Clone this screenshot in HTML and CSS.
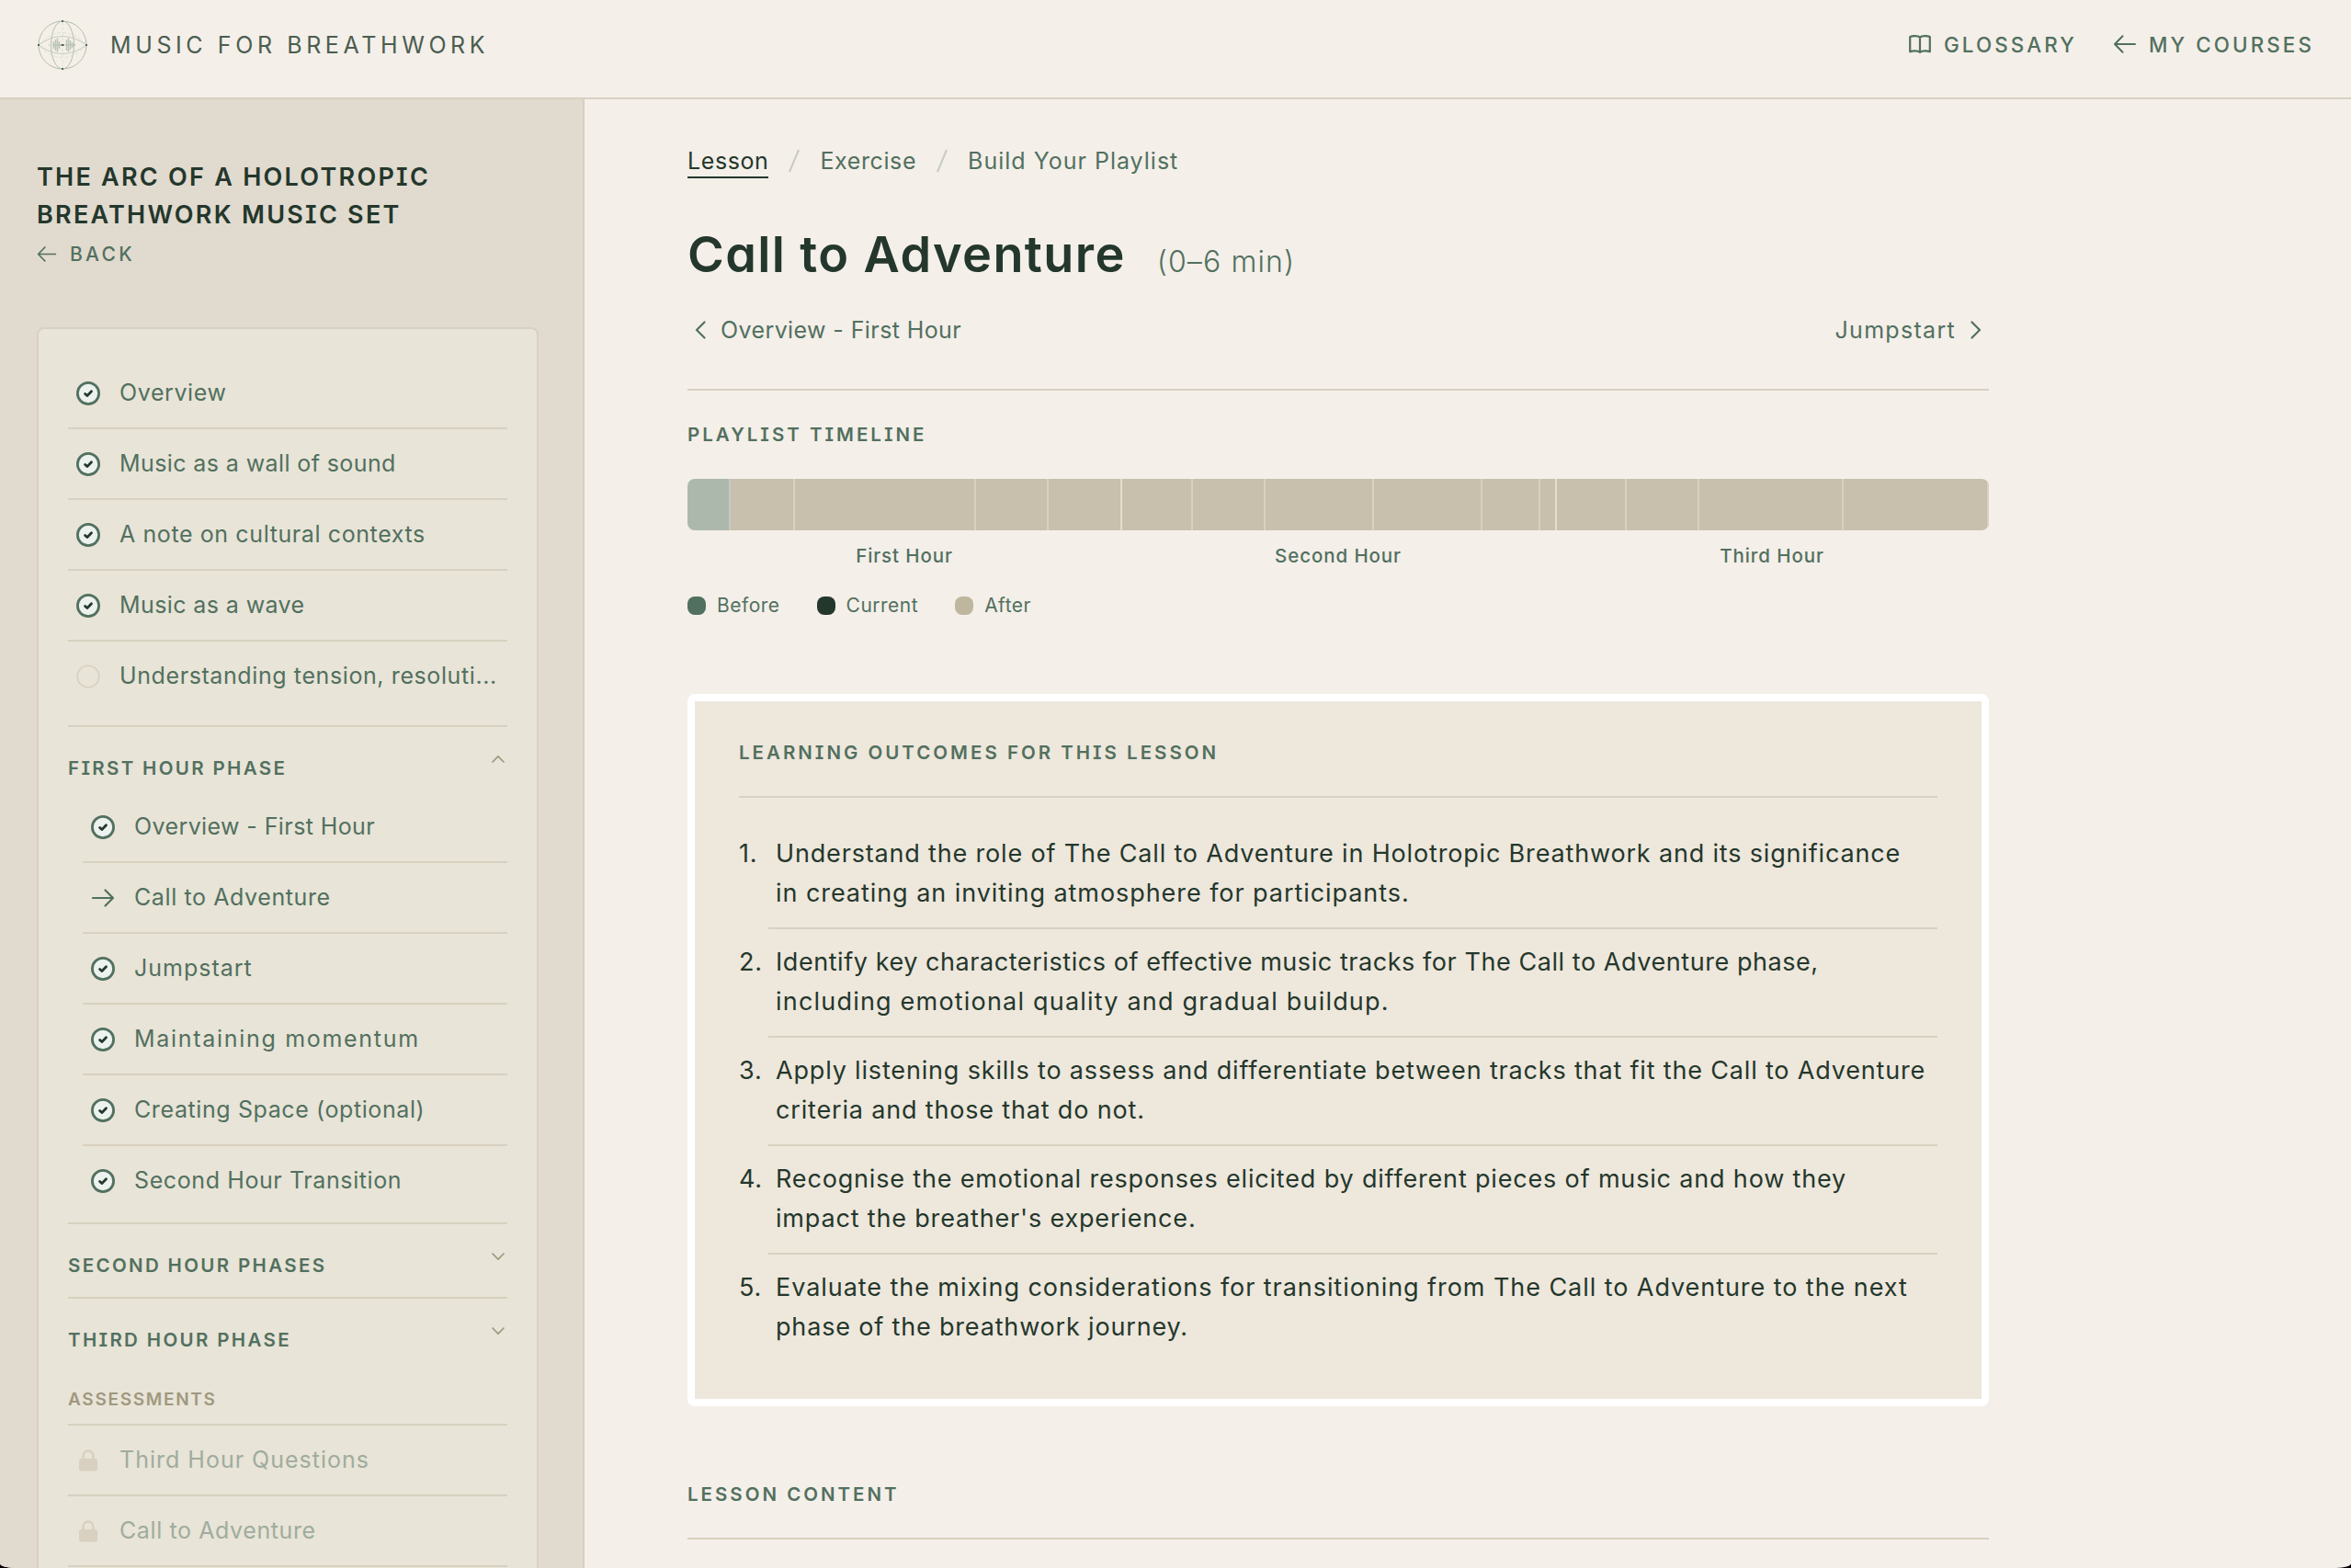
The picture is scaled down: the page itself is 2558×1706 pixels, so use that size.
FILE: index.html
```html
<!DOCTYPE html>
<html lang="en">
<head>
    <meta charset="UTF-8">
    <meta name="viewport" content="width=device-width, initial-scale=1.0">
    <title>Call to Adventure - Music for Breathwork</title>
    <link rel="stylesheet" href="styles.css">
</head>
<body>
    <!-- Shared icons -->
    <svg class="hidden">
        <symbol id="check" viewBox="0 0 26 26">
            <circle cx="13" cy="13" r="11.6" fill="#ecf2ee" stroke="#52705f" stroke-width="2.8"/>
            <path d="M9.6 13.4l2.3 2.2 4.6-4.9" fill="none" stroke="#24372c" stroke-width="2.8" stroke-linecap="round" stroke-linejoin="round"/>
        </symbol>
        <symbol id="empty" viewBox="0 0 26 26">
            <circle cx="13" cy="13" r="11.8" fill="none" stroke="#d8d0c0" stroke-width="1.6"/>
        </symbol>
        <symbol id="arrow-left" viewBox="0 0 24 20">
            <path d="M23 10H1.5M9.5 1.2L1 10l8.5 8.8" fill="none" stroke="currentColor" stroke-width="2" stroke-linecap="round" stroke-linejoin="round"/>
        </symbol>
        <symbol id="arrow-right" viewBox="0 0 26 26">
            <path d="M2 13h22M15.5 4.5l8.5 8.5-8.5 8.5" fill="none" stroke="#52705f" stroke-width="2.2" stroke-linecap="round" stroke-linejoin="round"/>
        </symbol>
        <symbol id="lock" viewBox="0 0 26 26">
            <path d="M7.5 12V8a5.5 5.5 0 0 1 11 0v4" fill="none" stroke="#d8d0c0" stroke-width="2.4"/>
            <rect x="3" y="11" width="20" height="13.5" rx="2.5" fill="#d8d0c0"/>
        </symbol>
        <symbol id="chevron" viewBox="0 0 16 16">
            <path d="M2 5l6 6.2 6-6.2" fill="none" stroke="currentColor" stroke-width="1.7" stroke-linecap="round" stroke-linejoin="round"/>
        </symbol>
    </svg>

    <div class="page">
        <header class="header">
            <a class="brand" href="#">
                <svg class="logo" viewBox="0 0 56 56">
                    <g fill="none" stroke="#b4bcb0" stroke-width="1">
                        <circle cx="28" cy="28" r="26"/>
                        <ellipse cx="28" cy="28" rx="12.5" ry="26"/>
                        <path d="M2 28Q28 9 54 28Q28 47 2 28" stroke="#c6ccc0"/>
                    </g>
                    <path d="M2 28Q28 1 54 28Q28 55 2 28M28 2v52" fill="none" stroke="#dfe1d2" stroke-dasharray="4 2"/>
                    <path d="M13 28h30" stroke="#c3cabf" stroke-width="2" stroke-dasharray="1 1"/>
                    <path d="M18.5 24v8M20.5 22v12M22.5 20.5v15M24.5 24v8M32.5 22v12M34.5 20.5v15M36.5 23v10M38.5 25v6" stroke="#bcc4b9" stroke-width="1.5"/>
                    <path d="M27 1h2v2h-2zM27 53h2v2h-2zM1 27h2v2h-2zM53 27h2v2h-2zM26.5 27h3v2h-3z" fill="#52655a"/>
                </svg>
                <span class="brand-name">MUSIC FOR BREATHWORK</span>
            </a>
            <nav class="top-nav">
                <a href="#">
                    <svg class="book" viewBox="0 0 24 20"><path d="M12 2.5C9.5.7 4.5.7 1.2 2v16.3c3.3-1.3 8.3-1.3 10.8.5 2.5-1.8 7.5-1.8 10.8-.5V2C19.5.7 14.5.7 12 2.5zM12 2.5v16.3" fill="none" stroke="currentColor" stroke-width="2.2" stroke-linejoin="round"/></svg>
                    GLOSSARY
                </a>
                <a href="#"><svg class="arrow"><use href="#arrow-left"/></svg>MY COURSES</a>
            </nav>
        </header>

        <div class="layout">
            <aside class="sidebar">
                <h2 class="course-title">THE ARC OF A HOLOTROPIC<br>BREATHWORK MUSIC SET</h2>
                <a class="back" href="#"><svg><use href="#arrow-left"/></svg>BACK</a>

                <div class="menu">
                    <ul class="lessons">
                        <li><svg><use href="#check"/></svg><span>Overview</span></li>
                        <li><svg><use href="#check"/></svg><span class="narrow">Music as a wall of sound</span></li>
                        <li><svg><use href="#check"/></svg><span>A note on cultural contexts</span></li>
                        <li><svg><use href="#check"/></svg><span class="narrow">Music as a wave</span></li>
                        <li><svg><use href="#empty"/></svg><span>Understanding tension, resoluti...</span></li>
                    </ul>

                    <div class="phase phase-open">
                        <div class="phase-title">FIRST HOUR PHASE<svg class="up"><use href="#chevron"/></svg></div>
                        <ul class="lessons">
                            <li><svg><use href="#check"/></svg><span class="narrow">Overview - First Hour</span></li>
                            <li><svg><use href="#arrow-right"/></svg><span>Call to Adventure</span></li>
                            <li><svg><use href="#check"/></svg><span class="wide">Jumpstart</span></li>
                            <li><svg><use href="#check"/></svg><span class="wider">Maintaining momentum</span></li>
                            <li><svg><use href="#check"/></svg><span>Creating Space (optional)</span></li>
                            <li><svg><use href="#check"/></svg><span>Second Hour Transition</span></li>
                        </ul>
                    </div>
                    <div class="phase">
                        <div class="phase-title">SECOND HOUR PHASES<svg><use href="#chevron"/></svg></div>
                    </div>
                    <div class="phase">
                        <div class="phase-title">THIRD HOUR PHASE<svg><use href="#chevron"/></svg></div>
                    </div>

                    <div class="assessments-title">ASSESSMENTS</div>
                    <ul class="lessons locked">
                        <li><svg><use href="#lock"/></svg><span class="wide">Third Hour Questions</span></li>
                        <li><svg><use href="#lock"/></svg><span>Call to Adventure</span></li>
                        <li></li>
                    </ul>
                </div>
            </aside>

            <main class="content">
                <nav class="tabs">
                    <a class="active" href="#">Lesson</a>
                    <svg viewBox="0 0 12 26"><path d="M1 25L11 1"/></svg>
                    <a href="#">Exercise</a>
                    <svg viewBox="0 0 12 26"><path d="M1 25L11 1"/></svg>
                    <a class="wide" href="#">Build Your Playlist</a>
                </nav>

                <div class="title-row">
                    <h1>Call to Adventure</h1>
                    <span class="duration">(0–6 min)</span>
                </div>

                <div class="pager">
                    <a class="narrow" href="#"><svg viewBox="0 0 12 20"><path d="M10.5 1.5L2 10l8.5 8.5"/></svg>Overview - First Hour</a>
                    <a class="wide" href="#">Jumpstart<svg viewBox="0 0 12 20"><path d="M1.5 1.5L10 10l-8.5 8.5"/></svg></a>
                </div>

                <section class="timeline">
                    <h3>PLAYLIST TIMELINE</h3>
                    <div class="bar">
                        <div class="before" style="width: 47px"></div>
                        <div style="width: 70px"></div>
                        <div style="width: 197px"></div>
                        <div style="width: 79px"></div>
                        <div class="hour-end" style="width: 80px"></div>
                        <div style="width: 77px"></div>
                        <div style="width: 79px"></div>
                        <div style="width: 118px"></div>
                        <div style="width: 118px"></div>
                        <div style="width: 63px"></div>
                        <div class="hour-end" style="width: 18px"></div>
                        <div style="width: 76px"></div>
                        <div style="width: 79px"></div>
                        <div style="width: 157px"></div>
                        <div style="width: 158px"></div>
                    </div>
                    <div class="hours">
                        <span>First Hour</span>
                        <span>Second Hour</span>
                        <span>Third Hour</span>
                    </div>
                    <div class="legend">
                        <span><i class="dot dot-before"></i>Before</span>
                        <span><i class="dot dot-current"></i>Current</span>
                        <span><i class="dot dot-after"></i>After</span>
                    </div>
                </section>

                <section class="outcomes">
                    <h3>LEARNING OUTCOMES FOR THIS LESSON</h3>
                    <ol>
                        <li><b>1.</b><p>Understand the role of The Call to Adventure in Holotropic Breathwork and its significance<br><span class="wide">in creating an inviting atmosphere for participants.</span></p></li>
                        <li><b>2.</b><p><span class="narrow">Identify key characteristics of effective music tracks for The Call to Adventure phase,</span><br><span class="wider">including emotional quality and gradual buildup.</span></p></li>
                        <li><b>3.</b><p>Apply listening skills to assess and differentiate between tracks that fit the Call to Adventure<br>criteria and those that do not.</p></li>
                        <li><b>4.</b><p>Recognise the emotional responses elicited by different pieces of music and how they<br>impact the breather's experience.</p></li>
                        <li><b>5.</b><p><span class="wide">Evaluate the mixing considerations for transitioning from The Call to Adventure to the next</span><br>phase of the breathwork journey.</p></li>
                    </ol>
                </section>

                <h3 class="lesson-content">LESSON CONTENT</h3>
            </main>
        </div>
    </div>
</body>
</html>
```
FILE: styles.css
```css
* {
    box-sizing: border-box;
}
html {
    background-color: #000;
}
body {
    margin: 0;
    font-family: Inter, "Open Sans", sans-serif;
    font-size: 25px;
    letter-spacing: 0.6px;
    color: #52705f;
}
a {
    color: inherit;
    text-decoration: none;
}
h1, h2, h3, p, ul, ol {
    margin: 0;
    padding: 0;
    font-weight: normal;
}
ul, ol {
    list-style: none;
}
svg {
    display: block;
    flex-shrink: 0;
}
.hidden {
    display: none;
}
.narrow {
    letter-spacing: 0.4px;
}
.wide {
    letter-spacing: 1px;
}
.wider {
    letter-spacing: 1.7px;
}
.page {
    height: 1706px;
    display: flex;
    flex-direction: column;
    overflow: hidden;
    background-color: #f4efe9;
    border-radius: 0 0 16px 16px / 0 0 5px 5px;
}

/* Header */
.header {
    height: 108px;
    flex-shrink: 0;
    display: flex;
    justify-content: space-between;
    padding: 21px 40px 0;
    border-bottom: 2px solid #d8d0c0;
}
.brand {
    display: flex;
    gap: 24px;
    height: 56px;
    align-items: center;
    color: #4b5d50;
}
.logo {
    width: 56px;
    height: 56px;
    background-color: #f4f0e8;
}
.brand-name {
    padding-bottom: 1px;
    font-size: 25px;
    letter-spacing: 4.6px;
}
.top-nav {
    display: flex;
    gap: 40px;
    height: 54px;
    font-size: 22.4px;
    font-weight: 500;
    letter-spacing: 3.1px;
}
.top-nav a {
    display: flex;
    align-items: center;
    gap: 14px;
}
.book, .arrow {
    width: 24px;
    height: 20px;
}

/* Sidebar */
.layout {
    display: flex;
    flex: 1;
    min-height: 0;
}
.sidebar {
    width: 636px;
    flex-shrink: 0;
    padding: 64px 48px 0 40px;
    overflow: hidden;
    background-color: #e1dace;
    border-right: 2px solid #d8d0c0;
}
.course-title {
    font-size: 27px;
    font-weight: 600;
    line-height: 41px;
    letter-spacing: 2.25px;
    color: #24372c;
    font-feature-settings: "cv08";
}
.back {
    display: flex;
    align-items: center;
    gap: 14px;
    height: 45px;
    font-size: 21px;
    font-weight: 500;
    letter-spacing: 3.3px;
}
.back svg {
    width: 22px;
    height: 17px;
}
.menu {
    margin-top: 57px;
    height: 1400px;
    padding: 32px;
    border: 2px solid #d8d0c0;
    border-radius: 8px;
    background-color: #e8e4d7;
}
.lessons li {
    display: flex;
    align-items: center;
    gap: 21px;
    height: 77px;
    padding-left: 9px;
    border-bottom: 2px solid #d8d0c0;
    white-space: nowrap;
}
.lessons li:last-child {
    border-bottom: none;
    height: 75px;
}
.lessons svg {
    width: 26px;
    height: 26px;
}
.lessons span {
    padding-bottom: 2px;
}
.phase {
    height: 81px;
    border-top: 2px solid #d8d0c0;
}
.phase-open {
    height: 541px;
    margin-top: 16px;
}
.phase-open .lessons {
    padding-left: 16px;
}
.phase-title {
    display: flex;
    justify-content: space-between;
    height: 71px;
    padding-top: 33px;
    font-size: 20.5px;
    font-weight: 600;
    line-height: 23px;
    letter-spacing: 2.35px;
    font-feature-settings: "cv08";
}
.phase-title svg {
    width: 16px;
    height: 16px;
    margin: -6px 2px 0 0;
    color: #a09880;
}
.phase-title .up {
    transform: rotate(180deg);
}
.assessments-title {
    height: 59px;
    padding-top: 19px;
    border-bottom: 2px solid #d8d0c0;
    font-size: 19px;
    font-weight: 600;
    line-height: 23px;
    letter-spacing: 1.7px;
    color: #a09880;
}
.locked {
    color: #a0ac9e;
}

/* Main content */
.content {
    width: 1528px;
    padding-left: 112px;
}
.content h3 {
    font-size: 20.5px;
    font-weight: 600;
    line-height: 24px;
    letter-spacing: 3px;
    font-feature-settings: "cv08";
}
.tabs {
    display: flex;
    align-items: center;
    margin-top: 48px;
    height: 38px;
    gap: 22px;
}
.tabs a {
    height: 38px;
    line-height: 38px;
}
.tabs svg {
    width: 12px;
    height: 26px;
    fill: none;
    stroke: #c8ccc0;
    stroke-width: 2;
}
.tabs .active {
    color: #24372c;
    border-bottom: 2px solid #24372c;
}
.title-row {
    display: flex;
    align-items: baseline;
    gap: 34px;
    margin-top: 50px;
    height: 66px;
}
h1 {
    font-size: 54px;
    font-weight: 600;
    line-height: 66px;
    letter-spacing: 1.4px;
    color: #24372c;
    font-feature-settings: "cv11";
}
.duration {
    font-size: 32px;
    font-weight: 300;
    letter-spacing: 1.1px;
}
.pager {
    display: flex;
    justify-content: space-between;
    align-items: center;
    height: 115px;
    padding: 0 8px 16px;
    border-bottom: 2px solid #d8d0c0;
}
.pager a {
    display: flex;
    align-items: center;
    gap: 16px;
}
.pager .wide {
    letter-spacing: 1.3px;
}
.pager svg {
    width: 12px;
    height: 20px;
    fill: none;
    stroke: currentColor;
    stroke-width: 2.2;
    stroke-linecap: round;
    stroke-linejoin: round;
}

/* Playlist timeline */
.timeline {
    padding-top: 36px;
}
.bar {
    display: flex;
    height: 56px;
    margin-top: 36px;
    border-radius: 8px;
    overflow: hidden;
}
.bar div {
    background-color: #c8c0ac;
    border-right: 2px solid #d8d1c1;
}
.bar .before {
    background-color: #adb8ac;
    border-right-color: #c3cbc1;
}
.bar .hour-end {
    border-right-color: #e3ddd0;
}
.hours {
    display: flex;
    margin-top: 15px;
    font-size: 20.5px;
    font-weight: 500;
    line-height: 26px;
    letter-spacing: 0.9px;
}
.hours span {
    flex: 1;
    text-align: center;
}
.legend {
    display: flex;
    gap: 40px;
    margin-top: 28px;
    font-size: 21px;
    line-height: 26px;
    letter-spacing: 0.5px;
}
.legend span {
    display: flex;
    align-items: center;
    gap: 12px;
}
.dot {
    width: 20px;
    height: 20px;
    border-radius: 8px;
}
.dot-before {
    background-color: #52705f;
}
.dot-current {
    background-color: #24372c;
}
.dot-after {
    background-color: #beb79e;
}

/* Learning outcomes */
.outcomes {
    height: 775px;
    margin-top: 83px;
    padding: 44px 48px 0;
    background-color: #eee7dc;
    border: 8px solid #fff;
    border-radius: 8px;
}
.outcomes h3 {
    height: 61px;
    border-bottom: 2px solid #d8d0c0;
}
.outcomes ol {
    padding-top: 25px;
    font-size: 27px;
    line-height: 42.5px;
    color: #24372c;
    letter-spacing: 0.83px;
}
.outcomes li {
    display: flex;
    height: 118px;
}
.outcomes b {
    width: 32px;
    flex-shrink: 0;
    padding-top: 15px;
    font-weight: normal;
}
.outcomes p {
    flex: 1;
    padding: 15px 0 0 8px;
    border-bottom: 2px solid #d8d0c0;
    white-space: nowrap;
}
.outcomes li:last-child p {
    border-bottom: none;
}
.outcomes .narrow {
    letter-spacing: 0.56px;
}
.outcomes .wide {
    letter-spacing: 0.94px;
}
.outcomes .wider {
    letter-spacing: 1.2px;
}
.content .lesson-content {
    height: 61px;
    margin-top: 84px;
    border-bottom: 2px solid #d8d0c0;
}
```
